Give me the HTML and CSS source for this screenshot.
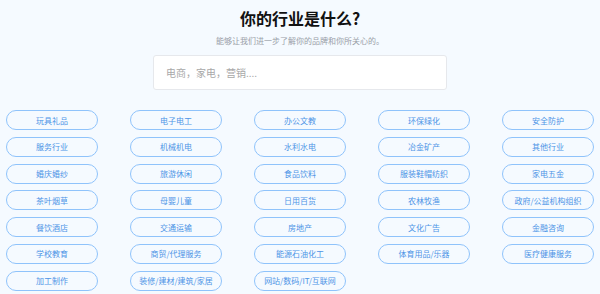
FILE: index.html
```html
<!DOCTYPE html>
<html lang="zh-CN">
<head>
    <meta charset="UTF-8">
    <meta name="viewport" content="width=device-width, initial-scale=1.0">
    <title>你的行业是什么?</title>
    <link rel="stylesheet" href="styles.css">
</head>
<body>
    <div class="page">
        <div class="header">
            <h1>你的行业是什么?</h1>
            <p class="subtitle">能够让我们进一步了解你的品牌和你所关心的。</p>
            <input type="text" class="search" placeholder="电商，家电，营销....">
        </div>
        <div class="tags">
            <span class="tag">玩具礼品</span>
            <span class="tag">电子电工</span>
            <span class="tag">办公文教</span>
            <span class="tag">环保绿化</span>
            <span class="tag">安全防护</span>
            <span class="tag">服务行业</span>
            <span class="tag">机械机电</span>
            <span class="tag">水利水电</span>
            <span class="tag">冶金矿产</span>
            <span class="tag">其他行业</span>
            <span class="tag">婚庆婚纱</span>
            <span class="tag">旅游休闲</span>
            <span class="tag">食品饮料</span>
            <span class="tag">服装鞋帽纺织</span>
            <span class="tag">家电五金</span>
            <span class="tag">茶叶烟草</span>
            <span class="tag">母婴儿童</span>
            <span class="tag">日用百货</span>
            <span class="tag">农林牧渔</span>
            <span class="tag">政府/公益机构组织</span>
            <span class="tag">餐饮酒店</span>
            <span class="tag">交通运输</span>
            <span class="tag">房地产</span>
            <span class="tag">文化广告</span>
            <span class="tag">金融咨询</span>
            <span class="tag">学校教育</span>
            <span class="tag">商贸/代理服务</span>
            <span class="tag">能源石油化工</span>
            <span class="tag">体育用品/乐器</span>
            <span class="tag">医疗健康服务</span>
            <span class="tag">加工制作</span>
            <span class="tag">装修/建材/建筑/家居</span>
            <span class="tag">网站/数码/IT/互联网</span>
        </div>
    </div>
</body>
</html>
```

FILE: styles.css
```css
body {
    margin: 0;
    padding: 0;
    background-color: #f5faff;
    font-family: "Noto Sans CJK SC", "Noto Sans", sans-serif;
}

.page {
    width: 600px;
    height: 294px;
    padding-top: 7px;
    box-sizing: border-box;
    overflow: hidden;
}

.header {
    display: flex;
    flex-direction: column;
    align-items: center;
}

h1 {
    margin: 0;
    font-size: 16px;
    line-height: 22px;
    font-weight: 700;
    color: #111;
}

.subtitle {
    margin: 6px 0 0;
    font-size: 8px;
    line-height: 12px;
    color: #9aa0a8;
}

.search {
    margin-top: 8px;
    width: 294px;
    height: 35px;
    padding: 0 12px;
    box-sizing: border-box;
    border: 1px solid #e6e8ec;
    border-radius: 3px;
    background-color: #fff;
    font-family: inherit;
    font-size: 10px;
    outline: none;
}

.search::placeholder {
    color: #a8a8a8;
}

.tags {
    width: 588px;
    margin: 20px auto 0;
    display: grid;
    grid-template-columns: repeat(5, 92px);
    grid-auto-rows: 20px;
    column-gap: 32px;
    row-gap: 6.8px;
}

.tag {
    display: flex;
    align-items: center;
    justify-content: center;
    border: 1px solid #8fc3fb;
    border-radius: 10px;
    box-sizing: border-box;
    font-size: 8px;
    color: #4d94e6;
    white-space: nowrap;
}
```
